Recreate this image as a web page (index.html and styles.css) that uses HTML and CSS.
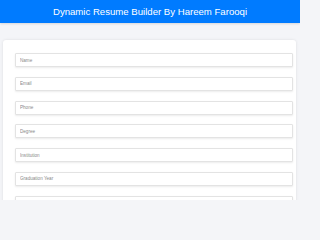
FILE: index.html
```html
<!DOCTYPE html>
<html lang="en">
<head>
<meta charset="utf-8">
<title>Dynamic Resume Builder</title>
<link rel="stylesheet" href="styles.css">
</head>
<body>
<div class="frame">
  <header class="top">
    <h1 class="title">Dynamic Resume Builder By Hareem Farooqi</h1>
  </header>
  <main class="page">
    <form class="card">
      <input class="field" type="text" placeholder="Name">
      <input class="field" type="email" placeholder="Email">
      <input class="field" type="tel" placeholder="Phone">
      <input class="field" type="text" placeholder="Degree">
      <input class="field" type="text" placeholder="Institution">
      <input class="field" type="text" placeholder="Graduation Year">
      <input class="field" type="text" placeholder="Job Title">
    </form>
  </main>
</div>
</body>
</html>
```
FILE: styles.css
```css
html, body {
  margin: 0;
  padding: 0;
  background: #f4f5f8;
  font-family: "Liberation Sans", Arial, sans-serif;
  overflow: hidden;
}
.frame {
  width: 300px;
  height: 200px;
  overflow: hidden;
  background: #f4f5f8;
}
.top {
  height: 23px;
  background: #007bff;
  display: flex;
  align-items: center;
  justify-content: center;
  box-shadow: 0 1px 2px rgba(0, 0, 0, 0.12);
}
.title {
  margin: 0;
  color: #ffffff;
  font-size: 9.6px;
  font-weight: normal;
  line-height: 1;
}
.page {
  padding: 17px 0 0 3px;
}
.card {
  width: 293px;
  box-sizing: border-box;
  background: #ffffff;
  border-radius: 3px;
  box-shadow: 0 0 3px rgba(0, 0, 0, 0.1);
  padding: 13px 3px 20px 12px;
  display: flex;
  flex-direction: column;
  gap: 9.8px;
}
.field {
  display: block;
  width: 278px;
  height: 14px;
  box-sizing: border-box;
  margin: 0;
  padding: 0 4px;
  border: 1px solid #e3e3e3;
  border-radius: 1px;
  background: #ffffff;
  box-shadow: 0 1px 2px rgba(0, 0, 0, 0.08);
  font-family: "Liberation Sans", Arial, sans-serif;
  font-size: 4.6px;
  color: #333;
  outline: none;
}
.field::placeholder {
  color: #8a8a8a;
}
```
